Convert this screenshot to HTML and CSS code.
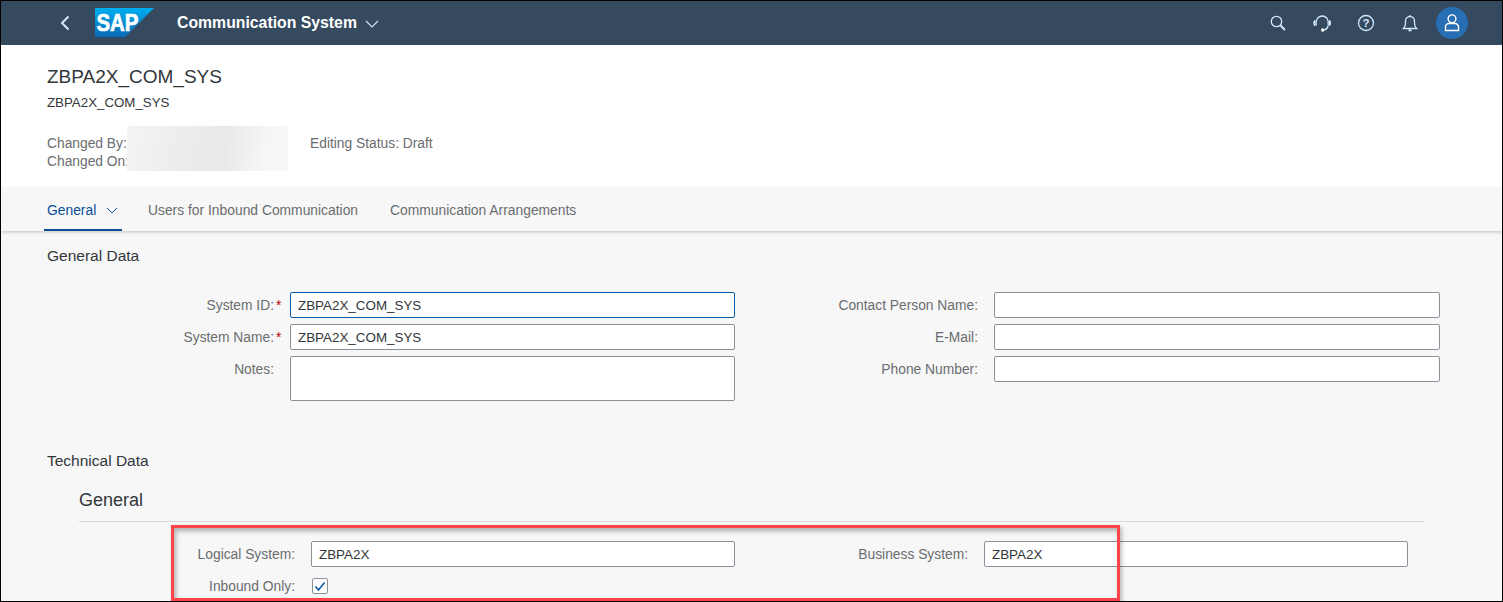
FILE: index.html
```html
<!DOCTYPE html>
<html lang="en">
<head>
<meta charset="utf-8">
<title>Communication System</title>
<link rel="stylesheet" href="styles.css">
</head>
<body>
<div class="frame">
  <header class="shell">
    <button class="back" aria-label="Back">
      <svg width="12" height="16" viewBox="0 0 12 16"><path d="M9.500 1.500 3 8l6.500 6.500" class="line-light"/></svg>
    </button>
    <svg class="logo" width="59" height="29" viewBox="0 0 59 29">
      <defs><linearGradient id="sapg" x1="0" y1="0" x2="0" y2="1"><stop offset="0" stop-color="#00aeef"/><stop offset="1" stop-color="#0a6ab8"/></linearGradient></defs>
      <polygon points="0,0 59,0 30,29 0,29" fill="url(#sapg)"/>
      <text x="1.500" y="23" class="logo-text" textLength="42" lengthAdjust="spacingAndGlyphs">SAP</text>
    </svg>
    <div class="app-title">Communication System</div>
    <svg class="title-chev" width="14" height="8" viewBox="0 0 14 8"><path d="M1 1l6 6 6-6" class="line-thin"/></svg>
    <div class="shell-actions">
      <svg class="sicon" width="22" height="22" viewBox="0 0 22 22"><circle cx="9.500" cy="9.500" r="5.200" class="line-icon"/><path d="M13.300 13.300 18 18" class="line-icon thick"/></svg>
      <svg class="sicon" width="22" height="22" viewBox="0 0 22 22"><path d="M5.200 13.500V10a6 6 0 0 1 12 0v3.500" class="line-icon"/><path d="M4.300 8.500c-1.400 1-1.400 4 0 5M18 8.500c1.400 1 1.400 4 0 5" class="line-icon thick"/><path d="M17 14c-.5 2.300-2 3.600-4 3.800" class="line-icon"/><circle cx="11.700" cy="18" r="1.700" fill="#fff"/></svg>
      <svg class="sicon" width="22" height="22" viewBox="0 0 22 22"><circle cx="11" cy="11" r="7.500" class="line-icon"/><text x="11" y="15" class="qmark">?</text></svg>
      <svg class="sicon" width="22" height="22" viewBox="0 0 22 22"><path d="M4.500 16.500c1.600-1.500 2-3 2-5.500V9a4.500 4.500 0 0 1 9 0v2c0 2.500.4 4 2 5.500z" class="line-icon"/><path d="M9.500 18.300h3" class="line-icon thick"/><path d="M11 3v1.500" class="line-icon"/></svg>
      <div class="avatar">
        <svg width="18" height="20" viewBox="0 0 18 20"><circle cx="9" cy="5.800" r="3.900" class="line-white"/><path d="M2.500 17.500v-3.500a3.500 3.500 0 0 1 3.500-3.500h6a3.500 3.500 0 0 1 3.500 3.500v3.500z" class="line-white"/></svg>
      </div>
    </div>
  </header>

  <section class="object-head">
    <h1 class="obj-title">ZBPA2X_COM_SYS</h1>
    <div class="obj-sub">ZBPA2X_COM_SYS</div>
    <div class="meta">
      <div class="meta-col">
        <div>Changed By:</div>
        <div>Changed On:</div>
      </div>
      <div class="redact"></div>
      <div class="meta-status">Editing Status: Draft</div>
    </div>
  </section>

  <nav class="tabs">
    <div class="tab active">General
      <svg class="tab-chev" width="12" height="7" viewBox="0 0 12 7"><path d="M1 1l5 5 5-5" class="line-tab"/></svg>
    </div>
    <div class="tab">Users for Inbound Communication</div>
    <div class="tab">Communication Arrangements</div>
  </nav>

  <main class="content">
    <h2 class="section-title">General Data</h2>
    <div class="form-top">
      <div class="form-col">
        <div class="row"><label class="lbl">System ID:<span class="req">*</span></label><div class="input focus">ZBPA2X_COM_SYS</div></div>
        <div class="row"><label class="lbl">System Name:<span class="req">*</span></label><div class="input">ZBPA2X_COM_SYS</div></div>
        <div class="row"><label class="lbl">Notes:<span class="req off">*</span></label><div class="input area"></div></div>
      </div>
      <div class="form-col second">
        <div class="row"><label class="lbl">Contact Person Name:</label><div class="input"></div></div>
        <div class="row"><label class="lbl">E-Mail:</label><div class="input"></div></div>
        <div class="row"><label class="lbl">Phone Number:</label><div class="input"></div></div>
      </div>
    </div>

    <h2 class="section-title tech">Technical Data</h2>
    <div class="sub-section">
      <h3 class="sub-title">General</h3>
      <div class="tech-form">
        <div class="tech-col">
          <div class="row"><label class="lbl">Logical System:</label><div class="input">ZBPA2X</div></div>
          <div class="row"><label class="lbl">Inbound Only:</label>
            <div class="check"><svg width="12" height="11" viewBox="0 0 12 11"><path d="M1.500 5.500 4.500 9l6-7.500" class="line-check"/></svg></div>
          </div>
        </div>
        <div class="tech-col right">
          <div class="row"><label class="lbl">Business System:</label><div class="input">ZBPA2X</div></div>
        </div>
      </div>
    </div>
    <div class="callout"></div>
  </main>
</div>
</body>
</html>
```
FILE: styles.css
```css
* { box-sizing: border-box; }
html, body { margin: 0; height: 100%; }
body { font-family: "Liberation Sans", Arial, sans-serif; color: #32363a; overflow: hidden; }
.frame { width: 1503px; height: 602px; border: 1px solid #000; display: flex; flex-direction: column; overflow: hidden; background: #f7f7f7; position: relative; }

/* shell */
.shell { height: 44px; flex: none; background: #354a5f; display: flex; align-items: center; color: #fff; }
.back { width: 12px; height: 16px; margin-left: 58px; padding: 0; border: 0; background: none; display: flex; }
.logo { margin-left: 24px; margin-top: -1px; }
.logo-text { font-weight: 700; font-size: 23px; fill: #fff; stroke: #fff; stroke-width: 0.7px; }
.app-title { margin-left: 23px; margin-top: -1px; font-weight: 700; font-size: 15.800px; }
.title-chev { margin-left: 8px; margin-top: 2px; }
.shell-actions { margin-left: auto; margin-right: 34px; display: flex; align-items: center; gap: 22px; }
.sicon { display: block; }
.avatar { width: 32px; height: 32px; border-radius: 50%; background: #286eb4; display: flex; align-items: center; justify-content: center; margin-left: -7px; }
.line-light { fill: none; stroke: #d1e8ff; stroke-width: 2; }
.line-thin { fill: none; stroke: #d1e8ff; stroke-width: 1.100; }
.line-icon { fill: none; stroke: #d1e8ff; stroke-width: 1.300; }
.line-icon.thick { stroke-width: 2; }
.line-white { fill: none; stroke: #fff; stroke-width: 1.400; }
.qmark { font-size: 11.500px; font-weight: 700; fill: #d1e8ff; text-anchor: middle; }

/* object header */
.object-head { height: 142px; flex: none; background: #fff; padding: 19px 0 0 46px; position: relative; }
.obj-title { margin: 0; font-size: 19px; font-weight: 400; line-height: 26px; }
.obj-sub { margin-top: 4px; font-size: 13.300px; line-height: 18px; }
.meta { margin-top: 23px; display: flex; font-size: 13.800px; line-height: 18px; color: #6a6d70; }
.meta-col { width: 263px; }
.redact { position: absolute; left: 126px; top: 81px; width: 161px; height: 45px; background: linear-gradient(100deg, #f4f4f4 0%, #ededed 30%, #e9e9e9 60%, #f5f6f6 85%, #f7f8f8 100%); }

/* tabs */
.tabs { height: 44px; flex: none; background: #f7f7f7; display: flex; padding-left: 43px; box-shadow: 0 2px 2px rgba(0,0,0,.14); position: relative; z-index: 1; font-size: 13.850px; color: #6a6d70; }
.tab { height: 44px; padding: 14px 3px 0; line-height: 18px; margin-right: 26px; white-space: nowrap; }
.tab.active { color: #0a4f96; border-bottom: 2px solid #0a4f96; width: 78px; display: flex; margin-right: 23px; }
.tab-chev { margin: 6px 0 0 10px; flex: none; }
.line-tab { fill: none; stroke: #0a4f96; stroke-width: 1; }

/* content */
.content { flex: 1; background: #f7f7f7; padding-left: 46px; position: relative; }
.section-title { margin: 0; font-size: 15.500px; font-weight: 400; line-height: 20px; padding-top: 15px; height: 34px; color: #32363a; }
.form-top { display: flex; margin-top: 27px; height: 109px; }
.form-col { display: flex; flex-direction: column; gap: 6px; }
.row { display: flex; align-items: flex-start; height: 26px; }
.lbl { width: 243px; text-align: right; font-size: 13.800px; line-height: 28px; color: #6a6d70; white-space: nowrap; }
.req { color: #bb0000; display: inline-block; width: 16px; text-align: left; padding-left: 2px; }
.req.off { visibility: hidden; }
.input { width: 445px; height: 26px; background: #fff; border: 1px solid #89919a; border-radius: 2px; padding: 0 7px; font-size: 13.400px; line-height: 26px; color: #32363a; }
.input.focus { border-color: #0a5ba8; }
.input.area { height: 45px; }
.second { margin-left: 59px; }
.second .lbl { width: 200px; padding-right: 16px; }
.second .input { width: 446px; }
.section-title.tech { margin-top: 50px; padding-top: 0; height: 20px; }
.sub-section { margin-left: 32px; width: 1345px; }
.sub-title { margin: 18px 0 0; font-size: 18px; font-weight: 400; line-height: 22px; height: 33px; border-bottom: 1px solid #d9d9d9; }
.tech-form { display: flex; margin-top: 19px; }
.tech-col { display: flex; flex-direction: column; gap: 6px; }
.tech-col .lbl { width: 232px; padding-right: 16px; }
.tech-col .input { width: 424px; }
.tech-col.right { margin-left: 17px; }
.check { width: 16px; height: 16px; margin: 5px 0 0 1px; background: #fff; border: 1px solid #89919a; border-radius: 2px; display: flex; align-items: center; justify-content: center; }
.line-check { fill: none; stroke: #0a5ba8; stroke-width: 1.600; }
.callout { position: absolute; left: 170px; top: 294px; width: 949px; height: 76px; border: 3px solid #fa434a; box-shadow: inset 2px 3px 5px rgba(0,0,0,.3), 2px 2px 4px rgba(0,0,0,.25); }
```
